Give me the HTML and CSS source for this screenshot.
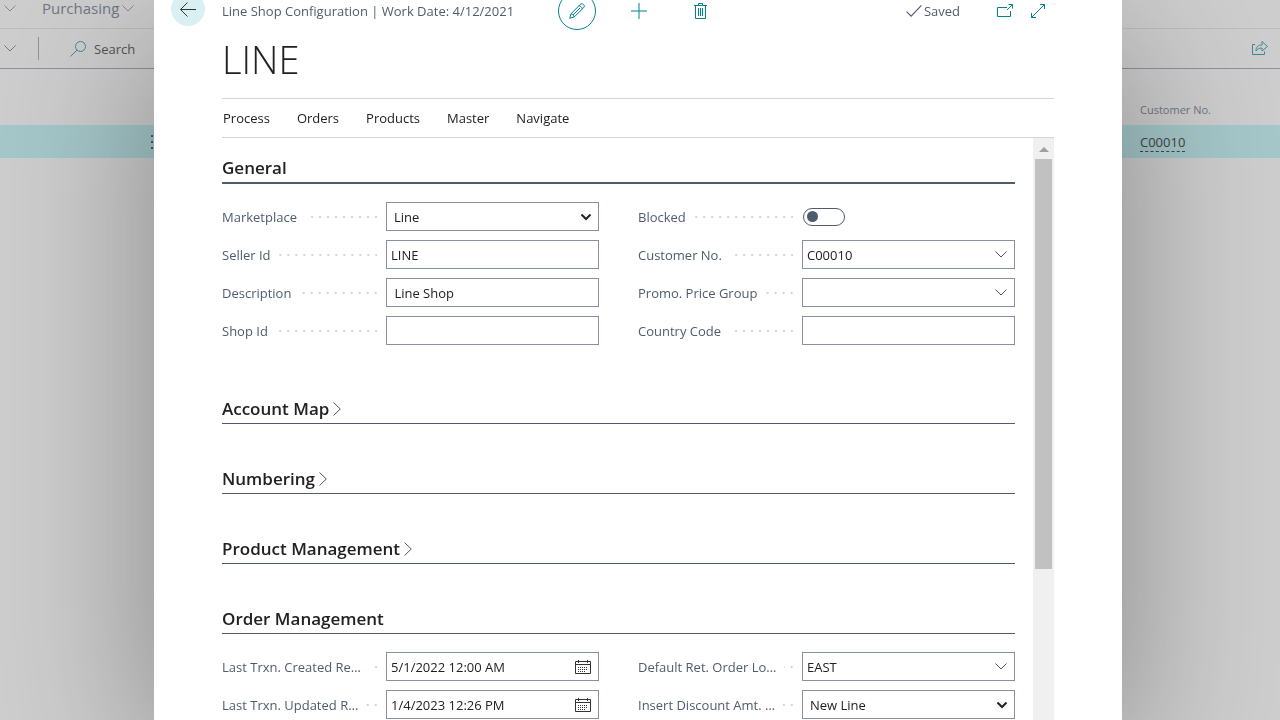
FILE: index.html
```
<!DOCTYPE html>
<html lang="en">
<head>
  <meta charset="UTF-8">
  <meta name="viewport" content="width=device-width, initial-scale=1">
  <title>Line Shop Configuration</title>
  <link rel="stylesheet" href="styles.css">
</head>
<body>
  <div class="backdrop">
    <nav class="top-nav">
      <a href="#" class="nav-more" aria-label="More">
        <svg class="chevron" viewBox="0 0 12 7"><path d="M.5.5 6 6 11.5.5"/></svg>
      </a>
      <a href="#">Purchasing<svg class="chevron" viewBox="0 0 12 7"><path d="M.5.5 6 6 11.5.5"/></svg></a>
    </nav>
    <div class="list-bar">
      <button class="views" aria-label="Views">
        <svg class="chevron" viewBox="0 0 12 7"><path d="M.5.5 6 6 11.5.5"/></svg>
      </button>
      <span class="divider"></span>
      <button class="search">
        <svg class="icon" viewBox="0 0 16 16"><circle cx="10.5" cy="5.5" r="5"/><path d="M7 9 .5 15.5"/></svg>
        Search
      </button>
      <button class="share" aria-label="Share">
        <svg class="icon" viewBox="0 0 16 16"><path d="M3 3.500H.5v10h12v-3M4 10c0-4 2-6 6-6V.5L15.500 5.500 10 10V7c-3 0-4.500 1-6 3z"/></svg>
      </button>
    </div>
    <table class="list">
      <thead>
        <tr><th></th><th class="customer">Customer No.</th></tr>
      </thead>
      <tbody>
        <tr>
          <td>
            <button class="row-menu" aria-label="Row options">
              <svg viewBox="0 0 2 14"><path d="M0 0h2v2H0zM0 6h2v2H0zM0 12h2v2H0z"/></svg>
            </button>
          </td>
          <td class="customer"><a href="#">C00010</a></td>
        </tr>
      </tbody>
    </table>
  </div>

  <main class="dialog">
    <header class="dialog-bar">
      <button class="back" aria-label="Back">
        <svg class="icon" viewBox="0 0 16 16"><path d="M16 8.500H.7M7.500 1.500l-7 7 7 7"/></svg>
      </button>
      <span class="caption">Line Shop Configuration | Work Date: 4/12/2021</span>
      <div class="actions">
        <button class="edit" aria-label="Edit">
          <svg class="icon" viewBox="0 0 16 16"><path d="M.7 15.300 2 10.800 11.200 1.500c1-1 2.200-1 3.300 0s1 2.300 0 3.300L5.200 14zM2 10.800c1.500 0 3 1.500 3.200 3.200M10 2.700c1.500 0 3 1.500 3.300 3.300M4 12l7-7"/></svg>
        </button>
        <button aria-label="New">
          <svg class="icon" viewBox="0 0 16 16"><path d="M8 0v16M0 8h16"/></svg>
        </button>
        <button aria-label="Delete">
          <svg class="trash" viewBox="0 0 13 16"><path d="M0 2.500h13M4.500 2.500v-2h4v2M1.500 2.500v13h10v-13M4.500 5v8M6.500 5v8M8.500 5v8"/></svg>
        </button>
      </div>
      <span class="saved"><svg class="icon" viewBox="0 0 14 11"><path d="M.5 6 4.500 10 13.500.5"/></svg>Saved</span>
      <button aria-label="Open in new window">
        <svg class="icon" viewBox="0 0 16 14"><path d="M10 3.500H.5v9h13V7M10 6l5-5M11.500.5h4v4"/></svg>
      </button>
      <button class="expand" aria-label="Expand">
        <svg class="icon" viewBox="0 0 16 16"><path d="M1.500 14.500l13-13M10 1.500h4.500V6M1.500 10v4.500H6"/></svg>
      </button>
    </header>

    <h1>LINE</h1>

    <nav class="menu">
      <a href="#">Process</a>
      <a href="#">Orders</a>
      <a href="#">Products</a>
      <a href="#">Master</a>
      <a href="#">Navigate</a>
    </nav>

    <div class="scroller">
      <div class="content">
        <section class="general">
          <h2>General</h2>
          <div class="fields">
            <div class="column">
              <div class="field">
                <label for="marketplace">Marketplace</label>
                <select id="marketplace"><option>Line</option></select>
              </div>
              <div class="field">
                <label for="seller">Seller Id</label>
                <input id="seller" type="text" value="LINE">
              </div>
              <div class="field">
                <label for="description">Description</label>
                <input id="description" type="text" value=" Line Shop">
              </div>
              <div class="field">
                <label for="shop">Shop Id</label>
                <input id="shop" type="text">
              </div>
            </div>
            <div class="column">
              <div class="field">
                <label for="blocked">Blocked</label>
                <input id="blocked" type="checkbox" class="switch">
              </div>
              <div class="field">
                <label for="customer">Customer No.</label>
                <div class="lookup">
                  <input id="customer" type="text" value="C00010">
                  <button aria-label="Choose customer"><svg class="chevron" viewBox="0 0 12 7"><path d="M.5.5 6 6 11.5.5"/></svg></button>
                </div>
              </div>
              <div class="field">
                <label for="promo">Promo. Price Group</label>
                <div class="lookup">
                  <input id="promo" type="text">
                  <button aria-label="Choose price group"><svg class="chevron" viewBox="0 0 12 7"><path d="M.5.5 6 6 11.5.5"/></svg></button>
                </div>
              </div>
              <div class="field">
                <label for="country">Country Code</label>
                <input id="country" type="text">
              </div>
            </div>
          </div>
        </section>

        <section>
          <h2>Account Map<svg class="more" viewBox="0 0 8 14"><path d="M.5.5 7.300 7 .5 13.500"/></svg></h2>
        </section>
        <section>
          <h2>Numbering<svg class="more" viewBox="0 0 8 14"><path d="M.5.5 7.300 7 .5 13.500"/></svg></h2>
        </section>
        <section>
          <h2>Product Management<svg class="more" viewBox="0 0 8 14"><path d="M.5.5 7.300 7 .5 13.500"/></svg></h2>
        </section>

        <section>
          <h2>Order Management</h2>
          <div class="fields">
            <div class="column">
              <div class="field">
                <label for="created">Last Trxn. Created Re…</label>
                <div class="lookup date">
                  <input id="created" type="text" value="5/1/2022 12:00 AM">
                  <button aria-label="Pick date"><svg class="calendar" viewBox="0 0 16 14"><path d="M.5 1.500h15v12H.5zM.5 4.500h15M3.500 0v3M12.500 0v3"/><path class="days" d="M3 7.500h10M3 9.500h10M3 11.500h8"/></svg></button>
                </div>
              </div>
              <div class="field">
                <label for="updated">Last Trxn. Updated R…</label>
                <div class="lookup date">
                  <input id="updated" type="text" value="1/4/2023 12:26 PM">
                  <button aria-label="Pick date"><svg class="calendar" viewBox="0 0 16 14"><path d="M.5 1.500h15v12H.5zM.5 4.500h15M3.500 0v3M12.500 0v3"/><path class="days" d="M3 7.500h10M3 9.500h10M3 11.500h8"/></svg></button>
                </div>
              </div>
            </div>
            <div class="column">
              <div class="field">
                <label for="location">Default Ret. Order Lo…</label>
                <div class="lookup">
                  <input id="location" type="text" value="EAST">
                  <button aria-label="Choose location"><svg class="chevron" viewBox="0 0 12 7"><path d="M.5.5 6 6 11.5.5"/></svg></button>
                </div>
              </div>
              <div class="field">
                <label for="discount">Insert Discount Amt. …</label>
                <select id="discount"><option>New Line</option></select>
              </div>
            </div>
          </div>
        </section>
      </div>
      <div class="scrollbar">
        <svg class="arrow" viewBox="0 0 10 5"><path d="M0 5 5 0l5 5z"/></svg>
        <div class="track"><div class="thumb"></div></div>
      </div>
    </div>
  </main>
</body>
</html>
```

FILE: styles.css
```
* {
  box-sizing: border-box;
}

body {
  margin: 0;
  height: 100vh;
  overflow: hidden;
  background-color: #cecece;
  color: #212121;
  font-family: "Open Sans", "Noto Sans", sans-serif;
  font-size: 13px;
}

a {
  color: inherit;
  text-decoration: none;
}

button {
  display: flex;
  align-items: center;
  justify-content: center;
  padding: 0;
  border: 0;
  background: none;
  color: #00838f;
  font: inherit;
}

svg {
  display: block;
  flex: none;
  fill: none;
  stroke: currentColor;
}

.icon {
  width: 16px;
  height: 16px;
}

.chevron {
  width: 12px;
  height: 7px;
}

/* List page behind the dialog */
.top-nav {
  display: flex;
  align-items: center;
  gap: 26px;
  height: 29px;
  padding: 0 4px 12px;
  border-bottom: 1px solid #bdbdbd;
  color: #6f7783;
  font-size: 15px;
  line-height: 16px;
}

.top-nav a {
  display: flex;
  align-items: center;
  gap: 3px;
}

.top-nav svg {
  color: #858a92;
}

.list-bar {
  display: flex;
  align-items: center;
  height: 40px;
  padding: 0 12px 0 4px;
  border-bottom: 1px solid #8d929b;
}

.views {
  color: #777;
}

.divider {
  width: 1px;
  height: 23px;
  margin: 0 31px 0 22px;
  background-color: #8d929b;
}

.search {
  gap: 8px;
  color: #555;
}

.search svg {
  color: #3d8c93;
}

.share {
  margin-left: auto;
  color: #3d8c93;
}

.list {
  width: 100%;
  border-collapse: collapse;
}

.list th {
  height: 56px;
  padding: 24px 0 0;
  color: #6f7783;
  font-size: 11px;
  font-weight: 400;
  text-align: left;
}

.list td {
  height: 33px;
  padding: 0;
  background-color: #a6c8ca;
  color: #444;
}

.list .customer {
  width: 140px;
}

.list .customer a {
  border-bottom: 1px dashed #444;
}

.row-menu {
  margin-left: 151px;
}

.row-menu svg {
  width: 2px;
  height: 14px;
  fill: #555;
  stroke: none;
}

/* Card dialog */
.dialog {
  position: fixed;
  top: 0;
  bottom: 0;
  left: 154px;
  right: 158px;
  display: flex;
  flex-direction: column;
  padding: 0 68px;
  background-color: #fff;
  box-shadow: 0 40px 150px rgba(0, 0, 0, 0.35);
}

.dialog-bar {
  display: flex;
  align-items: center;
  height: 36px;
  padding-bottom: 14px;
}

.back {
  width: 34px;
  height: 34px;
  margin: -4px 17px 0 -51px;
  border-radius: 50%;
  background-color: #d9f0f2;
  color: #333;
}

.caption,
.saved {
  color: #505c6d;
}

.actions {
  display: flex;
  flex: 1;
  align-items: center;
  gap: 35px;
  margin-left: 44px;
}

.edit {
  width: 38px;
  height: 38px;
  border: 1px solid #00838f;
  border-radius: 50%;
}

.trash {
  width: 13px;
  height: 16px;
  margin-left: 12px;
}

.saved {
  display: flex;
  align-items: center;
  gap: 2px;
  margin-right: 37px;
}

.expand {
  margin: 0 8px 0 17px;
}

h1 {
  margin: 0;
  height: 62px;
  font-size: 38px;
  font-weight: 300;
  line-height: 46px;
}

.menu {
  display: flex;
  align-items: center;
  gap: 27px;
  height: 40px;
  padding-left: 1px;
  border-top: 1px solid #d4d4da;
  border-bottom: 1px solid #d4d4da;
}

.scroller {
  display: flex;
  flex: 1;
  min-height: 0;
}

.content {
  flex: 1;
  padding: 16px 18px 0 0;
  overflow: hidden;
}

section {
  margin-bottom: 41px;
}

h2 {
  display: flex;
  align-items: center;
  gap: 4px;
  margin: 0;
  border-bottom: 1px solid #505c6d;
  font-size: 17px;
  font-weight: 600;
  line-height: 28px;
}

.general h2 {
  border-bottom-width: 2px;
}

.general .fields {
  padding-bottom: 9px;
}

.more {
  width: 8px;
  height: 14px;
  color: #555;
}

.fields {
  display: grid;
  grid-template-columns: 1fr 1fr;
  gap: 39px;
  padding-top: 18px;
}

.column {
  display: grid;
  gap: 9px;
}

.field {
  display: grid;
  grid-template-columns: 155px 1fr;
  gap: 9px;
  align-items: center;
  height: 29px;
}

label {
  display: flex;
  align-items: center;
  gap: 8px;
  color: #505c6d;
  white-space: nowrap;
}

/* Dotted leader from the label to its control */
label::after {
  content: "";
  flex: 1;
  height: 2px;
  background: linear-gradient(to left, #d4d6da 2px, transparent 2px) right / 8px 2px repeat-x;
}

input,
select {
  width: 100%;
  height: 29px;
  margin: 0;
  padding: 0 4px;
  border: 1px solid #8590a2;
  border-radius: 0;
  background-color: #fff;
  color: #212121;
  font: inherit;
}

select {
  appearance: none;
  padding-left: 7px;
  background-image: url("data:image/svg+xml,%3Csvg xmlns='http://www.w3.org/2000/svg' width='12' height='8'%3E%3Cpath d='M1.500 1.500 6 6l4.500-4.500' fill='none' stroke='%23212121' stroke-width='2'/%3E%3C/svg%3E");
  background-repeat: no-repeat;
  background-position: right 6px center;
}

.lookup {
  display: flex;
  align-items: center;
  height: 29px;
  border: 1px solid #8590a2;
}

.lookup input {
  flex: 1;
  min-width: 0;
  height: 27px;
  border: 0;
}

.lookup button {
  width: 26px;
  color: #555;
}

.date button {
  width: 30px;
  color: #333;
}

.calendar {
  width: 16px;
  height: 14px;
}

.days {
  stroke-dasharray: 1 1;
}

.switch {
  appearance: none;
  display: flex;
  align-items: center;
  width: 42px;
  height: 18px;
  margin-left: 1px;
  padding: 0 3px;
  border-color: #505c6d;
  border-radius: 9px;
}

.switch::before {
  content: "";
  width: 11px;
  height: 11px;
  border-radius: 50%;
  background-color: #505c6d;
}

.scrollbar {
  display: flex;
  flex-direction: column;
  align-items: center;
  width: 21px;
  background-color: #f0f0f0;
}

.arrow {
  width: 10px;
  height: 5px;
  margin: 9px 0 7px;
  fill: #a0a0a0;
  stroke: none;
}

.track {
  flex: 1;
}

.thumb {
  width: 17px;
  height: 73%;
  background-color: #c1c1c1;
}
```
